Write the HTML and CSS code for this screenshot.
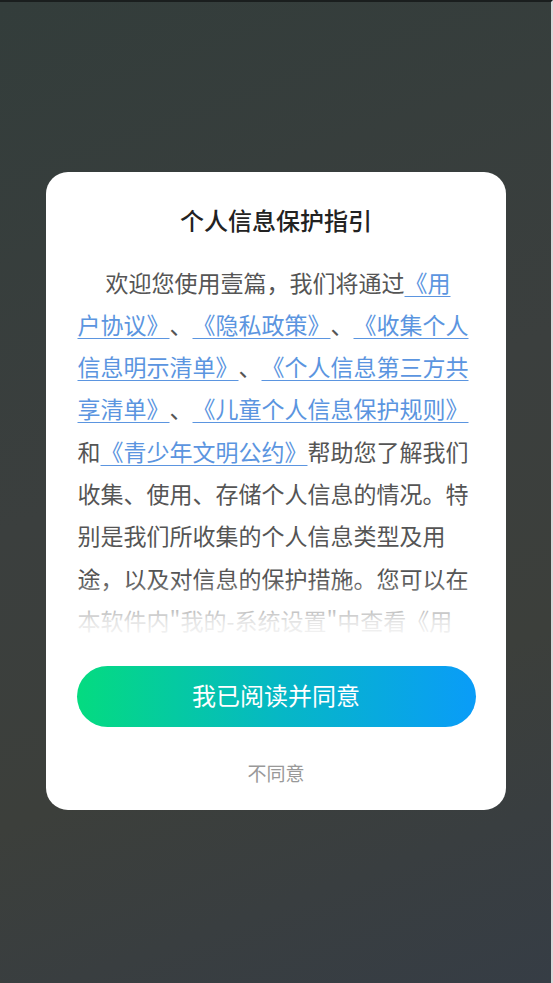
FILE: index.html
```html
<!DOCTYPE html>
<html lang="zh-CN">
<head>
<meta charset="utf-8">
<title>个人信息保护指引</title>
<link rel="stylesheet" href="styles.css">
</head>
<body>
<div class="screen">
  <div class="card">
    <h1 class="title">个人信息保护指引</h1>
    <div class="content">
      <p class="text">欢迎您使用壹篇，我们将通过<a class="link">《用户协议》</a>、<a class="link">《隐私政策》</a>、<a class="link">《收集个人信息明示清单》</a>、<a class="link">《个人信息第三方共享清单》</a>、<a class="link">《儿童个人信息保护规则》</a>和<a class="link">《青少年文明公约》</a>帮助您了解我们收集、使用、存储个人信息的情况。特别是我们所收集的个人信息类型及用途，以及对信息的保护措施。您可以在本软件内"我的-系统设置"中查看《用户协议》、《隐私政策》等内容。</p>
      <div class="fade"></div>
    </div>
    <button class="agree">我已阅读并同意</button>
    <div class="disagree">不同意</div>
  </div>
</div>
</body>
</html>
```
FILE: styles.css
```css
* { box-sizing: border-box; }
html, body {
  margin: 0;
  padding: 0;
  height: 100%;
}
body {
  font-family: "Noto Sans CJK SC", "Noto Sans", sans-serif;
  background: #3a3f3d;
}
.screen {
  height: 100vh;
  display: flex;
  align-items: center;
  justify-content: center;
  background: linear-gradient(160deg, #333d3b 0%, #3b3f3e 45%, #3c3f3b 70%, #363d45 100%);
  border-top: 2px solid #1a1e1e;
  border-right: 2px solid #d8dadb;
  border-bottom-left-radius: 6px;
}
.card {
  width: 460px;
  height: 638px;
  margin-bottom: 4px;
  background: #fff;
  border-radius: 22px;
  padding: 32px 30px 24px 31px;
  display: flex;
  flex-direction: column;
}
.title {
  margin: 0;
  font-size: 24px;
  line-height: 32px;
  font-weight: 500;
  color: #222;
  text-align: center;
}
.content {
  position: relative;
  margin-top: 25px;
  height: 384px;
  overflow: hidden;
  padding-left: 1px;
}
.text {
  margin: 0;
  width: 392px;
  font-size: 23px;
  line-height: 42.3px;
  color: #555;
  text-indent: 28px;
  text-spacing-trim: space-all;
  font-feature-settings: "halt" 0, "chws" 0;
}
.link {
  color: #5b95e0;
  text-decoration: underline;
  text-underline-offset: 4px;
  text-decoration-thickness: 1px;
}
.fade {
  position: absolute;
  left: 0;
  right: 0;
  bottom: 0;
  height: 66px;
  background: linear-gradient(to bottom, rgba(255,255,255,0) 0%, rgba(255,255,255,0.85) 65%, #fff 100%);
}
.agree {
  margin-top: 21px;
  height: 61px;
  width: 100%;
  border: none;
  border-radius: 31px;
  background: linear-gradient(to right, #04db80 0%, #06b8c4 50%, #0a9cf8 100%);
  color: #fff;
  font-family: inherit;
  font-size: 24px;
  padding: 0 0 3px;
}
.disagree {
  margin-top: 33px;
  text-align: center;
  font-size: 19px;
  line-height: 26px;
  color: #999;
}
```
